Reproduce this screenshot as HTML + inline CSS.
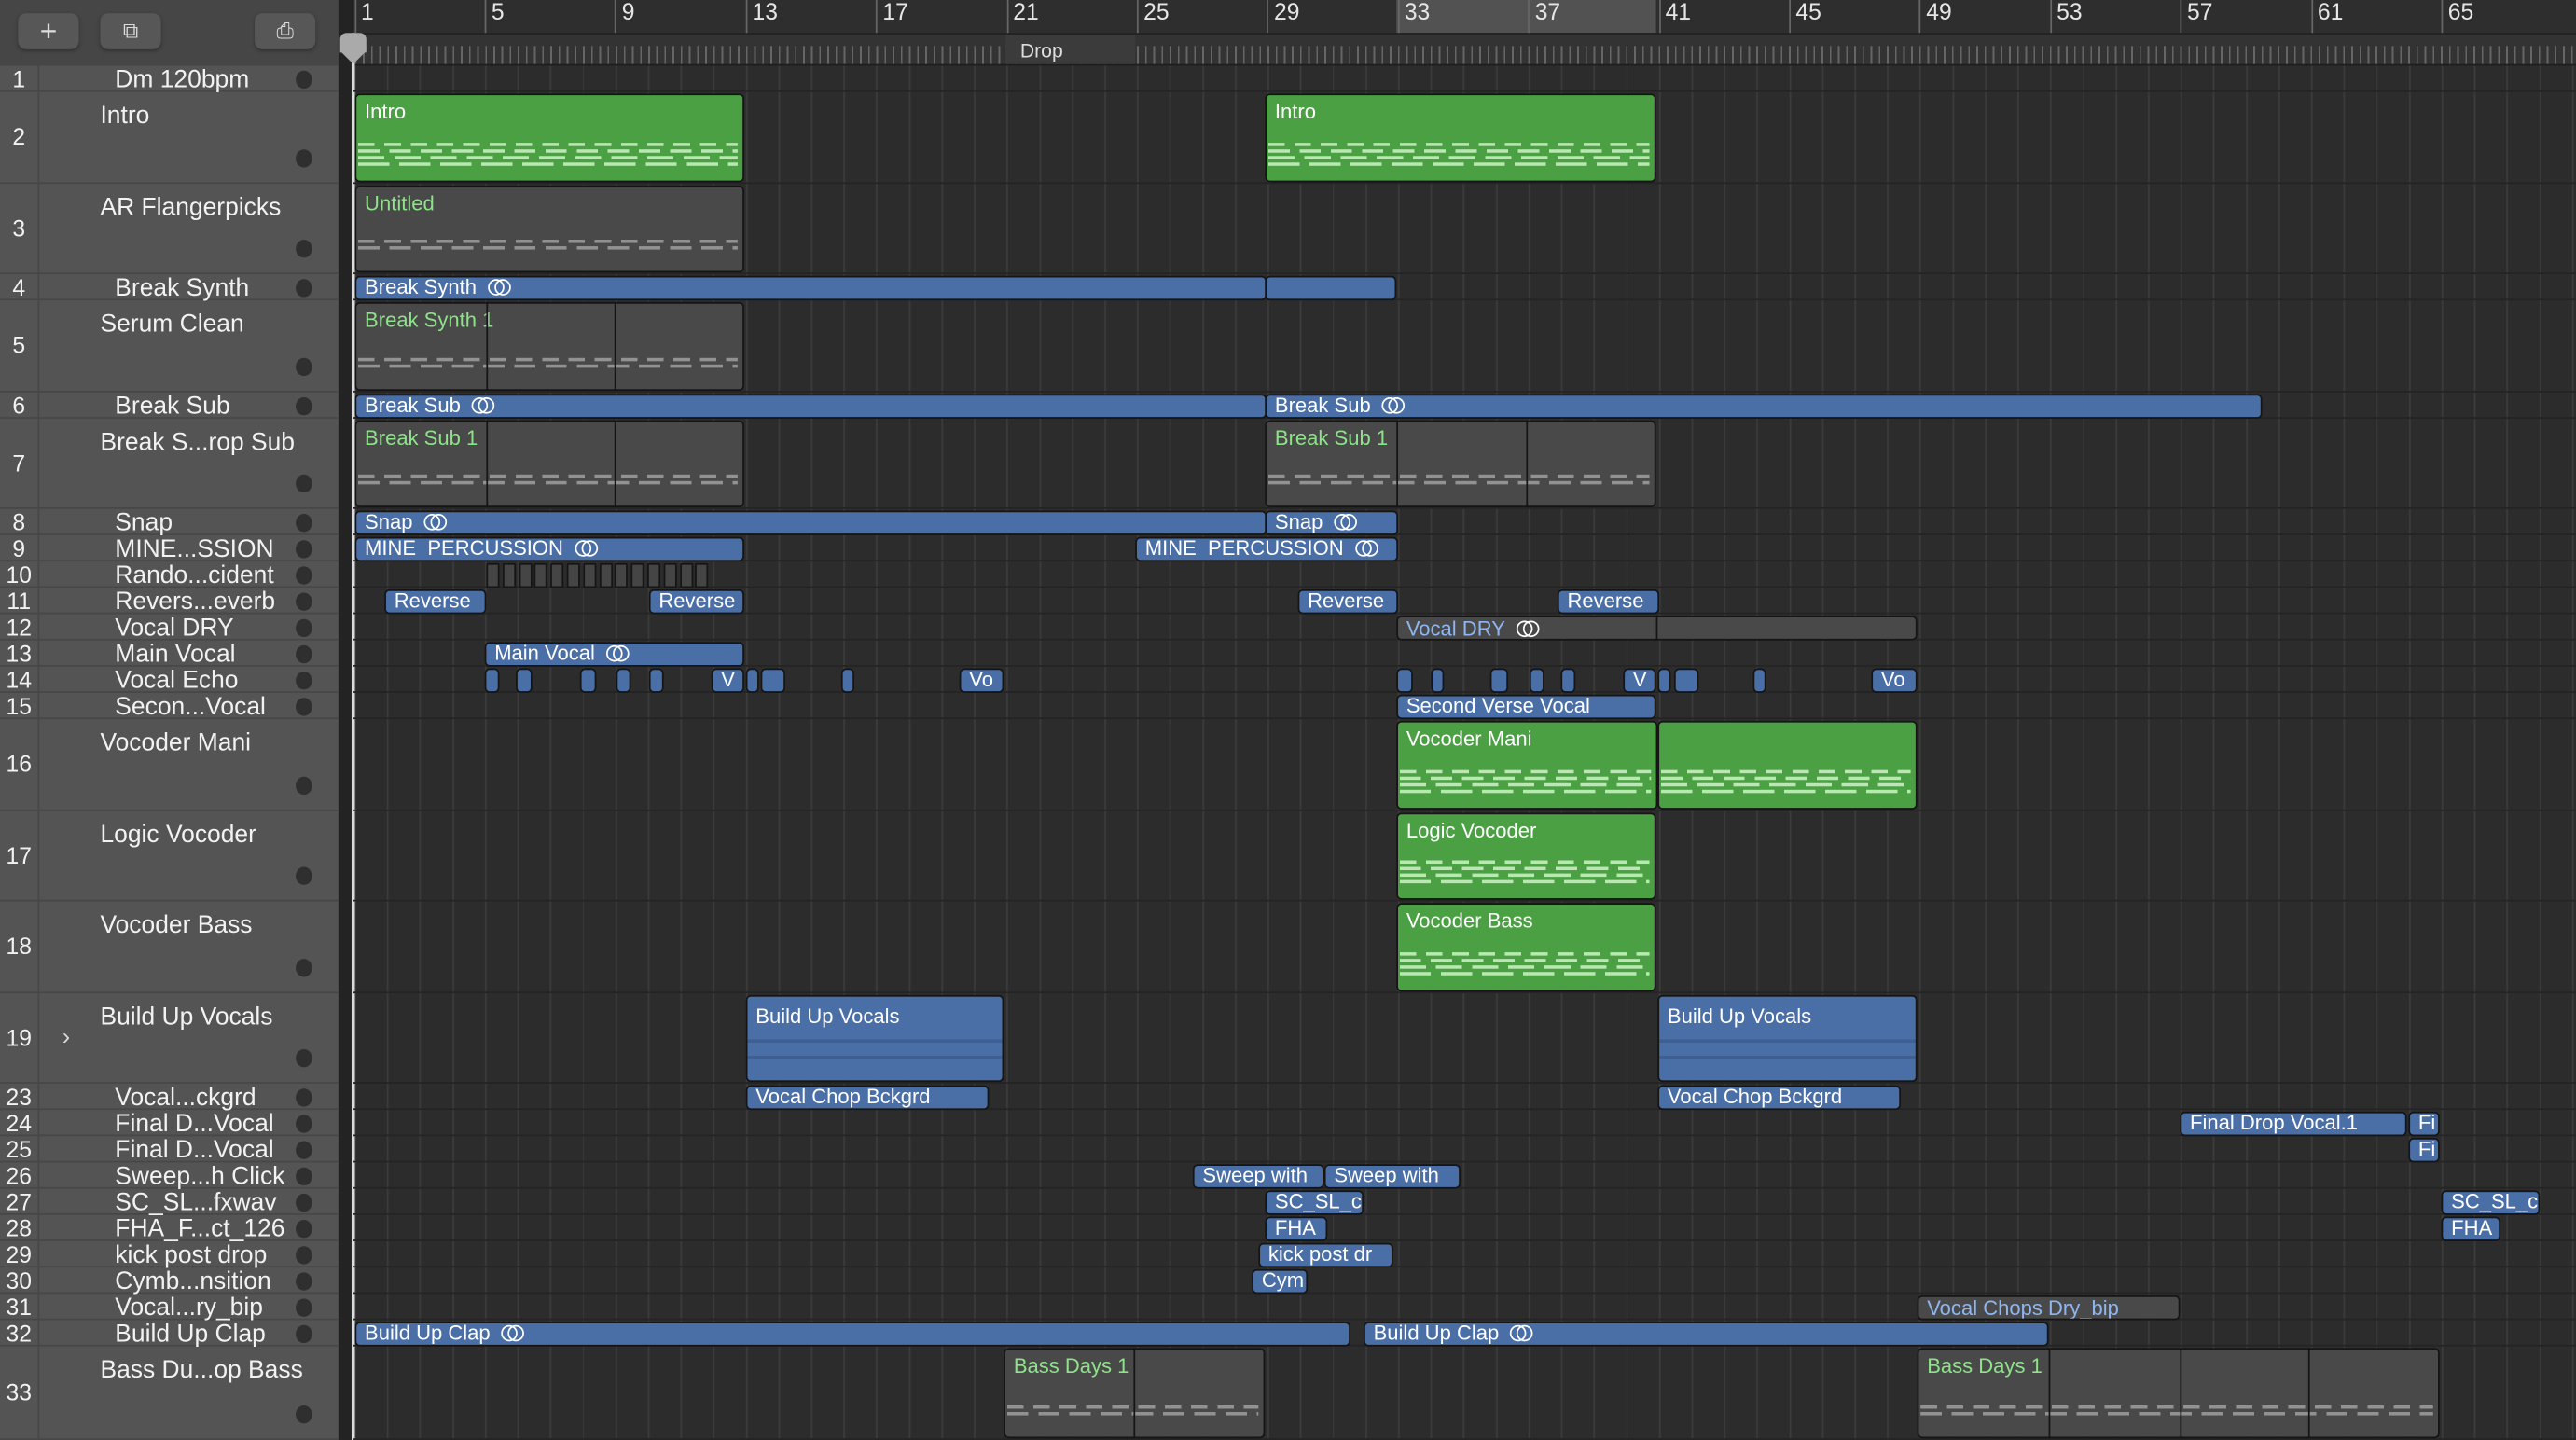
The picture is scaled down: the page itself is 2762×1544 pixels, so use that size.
<!DOCTYPE html>
<html><head><meta charset="utf-8">
<style>
html,body{margin:0;padding:0;width:2762px;height:1544px;overflow:hidden;background:#2c2c2c;}
#w{position:absolute;left:0;top:0;width:1568px;height:877px;transform:scale(1.76148,1.7605);transform-origin:0 0;font-family:"Liberation Sans",sans-serif;background:#2c2c2c;overflow:hidden;}
.a{position:absolute;}
#tl{position:absolute;left:0;top:40px;width:206px;height:837px;background:#545454;}
#hdr{position:absolute;left:0;top:0;width:206px;height:40px;background:#464646;}
.btn{position:absolute;top:8px;width:37px;height:22px;background:#575757;border-radius:5px;box-shadow:0 1px 2px #333;color:#ddd;text-align:center;font-size:18px;line-height:22px;}
.tr{position:absolute;left:0;width:206px;border-bottom:1px solid #474747;box-sizing:border-box;color:#f2f2f2;}
.tr .n{position:absolute;left:0;width:24px;text-align:center;font-size:14px;border-right:1px solid #474747;height:100%;box-sizing:border-box;}
.tr .t{position:absolute;left:70px;font-size:15px;white-space:nowrap;}
.tr .d{position:absolute;left:180px;width:10px;height:11px;border-radius:50%;background:#2f2f2f;}
.row{position:absolute;left:215px;width:1353px;border-bottom:1px solid #242424;box-sizing:border-box;}
.r{position:absolute;box-sizing:border-box;border:1px solid #151515;border-radius:3px;font-size:12.5px;white-space:nowrap;overflow:hidden;padding-left:5px;}
.b{background:#4a6ea6;color:#fff;line-height:13px;}
.g{background:#4aa043;color:#fff;}
.gr{background:#494949;color:#8ee38a;}
.lp{display:inline-block;width:14px;height:10px;position:relative;vertical-align:-1px;margin-left:7px;}
.lp:before,.lp:after{content:"";position:absolute;top:0;width:8px;height:8px;border:1.2px solid #fff;border-radius:50%;}
.lp:before{left:0}.lp:after{left:4px}
</style></head><body><div id="w">
<div class="a" style="left:215px;top:40px;width:1353px;height:837px;background:repeating-linear-gradient(90deg,#3b3b3b 0 1px,transparent 1px 19.85px);background-position:0.7px 0;"></div>
<div class="a" style="left:206px;top:0;width:1362px;height:20px;background:#2e2e2e;"></div>
<div class="a" style="left:850px;top:0;width:158px;height:20px;background:#525252;"></div>
<div class="a" style="left:206px;top:20px;width:1362px;height:20px;background:#333;border-top:1px solid #222;border-bottom:1px solid #1e1e1e;box-sizing:border-box;"></div>
<div class="a" style="left:216px;top:28px;width:1352px;height:11px;background:repeating-linear-gradient(90deg,#888 0 1px,transparent 1px 4.96px);opacity:.6"></div>
<div class="a" style="left:612px;top:21px;width:79px;height:18px;background:#3b3b3b;color:#ddd;font-size:12px;line-height:20px;padding-left:9px;box-sizing:border-box;">Drop</div>
<div class="a" id="bars" style="left:215.7px;top:0;height:40px;width:1353px;color:#e6e6e6;font-size:14px;"></div>
<div class="a" style="left:206px;top:0;width:9px;height:877px;background:#232323;"></div>
<div id="hdr"></div>
<div class="btn" style="left:11px">+</div>
<div class="btn" style="left:61px;font-size:13px">⧉</div>
<div class="btn" style="left:155px;font-size:13px">⎙</div>
<div id="tl"></div>
<div class="a" style="left:214px;top:20px;width:2px;height:857px;background:#ddd;"></div>
<div class="a" style="left:207px;top:20px;width:16px;height:12px;background:#aaa;border-radius:4px 4px 0 0;"></div>
<div class="a" style="left:207px;top:31px;width:0;height:0;border-left:8px solid transparent;border-right:8px solid transparent;border-top:8px solid #aaa;"></div>
</div>
<script>
var W=document.getElementById('w');
function add(h){W.insertAdjacentHTML('beforeend',h);}
var bars=document.getElementById('bars');var s='';
for(var n=1;n<=65;n+=4){var x=(n-1)*19.85;s+='<div class="a" style="left:'+x+'px;top:0;height:20px;border-left:1px solid #666;padding-left:3px;line-height:15px">'+n+'</div>';}
bars.innerHTML=s;
var rows=[[1,40,16,'Dm 120bpm'],[2,56,55.5,'Intro'],[3,111.5,55.5,'AR Flangerpicks'],[4,167,16,'Break Synth'],[5,183,55.5,'Serum Clean'],[6,238.5,16,'Break Sub'],[7,254.5,55.5,'Break S...rop Sub'],[8,310,16,'Snap'],[9,326,16,'MINE...SSION'],[10,342,16,'Rando...cident'],[11,358,16,'Revers...everb'],[12,374,16,'Vocal DRY'],[13,390,16,'Main Vocal'],[14,406,16,'Vocal Echo'],[15,422,16,'Secon...Vocal'],[16,438,55.5,'Vocoder Mani'],[17,493.5,55.5,'Logic Vocoder'],[18,549,55.5,'Vocoder Bass'],[19,604.5,55.5,'Build Up Vocals'],[23,660,16,'Vocal...ckgrd'],[24,676,16,'Final D...Vocal'],[25,692,16,'Final D...Vocal'],[26,708,16,'Sweep...h Click'],[27,724,16,'SC_SL...fxwav'],[28,740,16,'FHA_F...ct_126'],[29,756,16,'kick post drop'],[30,772,16,'Cymb...nsition'],[31,788,16,'Vocal...ry_bip'],[32,804,16,'Build Up Clap'],[33,820,57,'Bass Du...op Bass']];
var T={};
rows.forEach(function(r){T[r[0]]=r;var big=r[2]>20;
add('<div class="tr" style="top:'+r[1]+'px;height:'+r[2]+'px"><div class="n" style="line-height:'+r[2]+'px">'+r[0]+'</div><div class="t" style="'+(big?'left:61px;top:6px':'top:0;line-height:17px')+'">'+r[3]+'</div><div class="d" style="top:'+(big?r[2]-21:3)+'px"></div>'+(r[0]==19?'<div class="a" style="left:38px;top:18px;font-size:14px;color:#ddd">›</div>':'')+'</div>');
add('<div class="row" style="top:'+r[1]+'px;height:'+r[2]+'px"></div>');});
function reg(row,x1,x2,cls,txt,loop,extra,segs){var r=T[row];var big=r[2]>20;var top=r[1]+1,h=big?r[2]-2:15;
var inner=txt+(loop?'<span class="lp"></span>':'');
add('<div class="r '+cls+'" style="left:'+x1+'px;width:'+(x2-x1)+'px;top:'+top+'px;height:'+h+'px;'+(big?'padding-top:3px;':'')+(extra||'')+'">'+inner+'</div>');
if(big&&cls!='b'){var col=cls=='g'?'#c6efbf':'#9a9a9a';var n=cls=='g'?4:2;
for(var i=0;i<n;i++){add('<div class="a" style="left:'+(x1+2)+'px;width:'+(x2-x1-6)+'px;top:'+(top+h-20+i*4-(cls=='gr'?0:4))+'px;height:2px;background:repeating-linear-gradient(90deg,'+col+' 0 '+(10+i*3)+'px,transparent '+(10+i*3)+'px '+(16+i*3)+'px);opacity:.9"></div>');}}
(segs||[]).forEach(function(sx){add('<div class="a" style="left:'+sx+'px;top:'+top+'px;width:1px;height:'+h+'px;background:#151515"></div>');});
}
reg(2,216,453,'g','Intro');reg(2,770,1008,'g','Intro');
reg(3,216,453,'gr','Untitled');
reg(4,216,771,'b','Break Synth',1);reg(4,770,850,'b','');
reg(5,216,453,'gr','Break Synth 1',0,'',[296,374]);
reg(6,216,771,'b','Break Sub',1);reg(6,770,1377,'b','Break Sub',1);
reg(7,216,453,'gr','Break Sub 1',0,'',[296,374]);reg(7,770,1008,'gr','Break Sub 1',0,'',[850,929]);
reg(8,216,771,'b','Snap',1);reg(8,770,851,'b','Snap',1);
reg(9,216,453,'b','MINE&nbsp; PERCUSSION',1);reg(9,691,851,'b','MINE&nbsp; PERCUSSION',1);
for(var i=0;i<14;i++)reg(10,296+i*9.8,304+i*9.8,'gr','','','padding:0;background:#454545;border-radius:1px');
reg(11,234,296,'b','Reverse');reg(11,395,453,'b','Reverse');reg(11,790,851,'b','Reverse');reg(11,948,1010,'b','Reverse');
reg(12,850,1167,'gr','Vocal DRY',1,'color:#8fb6f0',[1008]);
reg(13,295,453,'b','Main Vocal',1);
[[295,304],[314,324],[353,363],[375,384],[395,404],[454,462],[463,478],[512,520],[850,860],[871,879],[907,918],[931,940],[950,959],[1009,1017],[1019,1034],[1067,1075]].forEach(function(p){reg(14,p[0],p[1],'b','','','padding:0');});
reg(14,433,453,'b','V');reg(14,584,611,'b','Vo');reg(14,988,1008,'b','V');reg(14,1139,1167,'b','Vo');
reg(15,850,1008,'b','Second Verse Vocal');
reg(16,850,1009,'g','Vocoder Mani');reg(16,1009,1167,'g','');
reg(17,850,1008,'g','Logic Vocoder');reg(18,850,1008,'g','Vocoder Bass');
var bu='background:linear-gradient(#4a6ea6 0 26px,#3f5f92 26px 28px,#4a6ea6 28px 36px,#3f5f92 36px 38px,#4a6ea6 38px);line-height:18px';
reg(19,454,611,'b','Build Up Vocals',0,bu);
reg(19,1009,1167,'b','Build Up Vocals',0,bu);
reg(23,454,602,'b','Vocal Chop Bckgrd');reg(23,1009,1157,'b','Vocal Chop Bckgrd');
reg(24,1327,1465,'b','Final Drop Vocal.1');reg(24,1466,1485,'b','Fi');reg(25,1466,1485,'b','Fi');
reg(26,726,806,'b','Sweep with');reg(26,806,889,'b','Sweep with');
reg(27,770,830,'b','SC_SL_c');reg(27,1486,1546,'b','SC_SL_c');
reg(28,770,808,'b','FHA');reg(28,1486,1522,'b','FHA');
reg(29,766,848,'b','kick post dr');reg(30,762,796,'b','Cym');
reg(31,1167,1327,'gr','Vocal Chops Dry_bip',0,'color:#8fb6f0');
reg(32,216,822,'b','Build Up Clap',1);reg(32,830,1247,'b','Build Up Clap',1);
reg(33,611,770,'gr','Bass Days 1',0,'',[690]);reg(33,1167,1485,'gr','Bass Days 1',0,'',[1247,1327,1405]);
</script>
</body></html>
